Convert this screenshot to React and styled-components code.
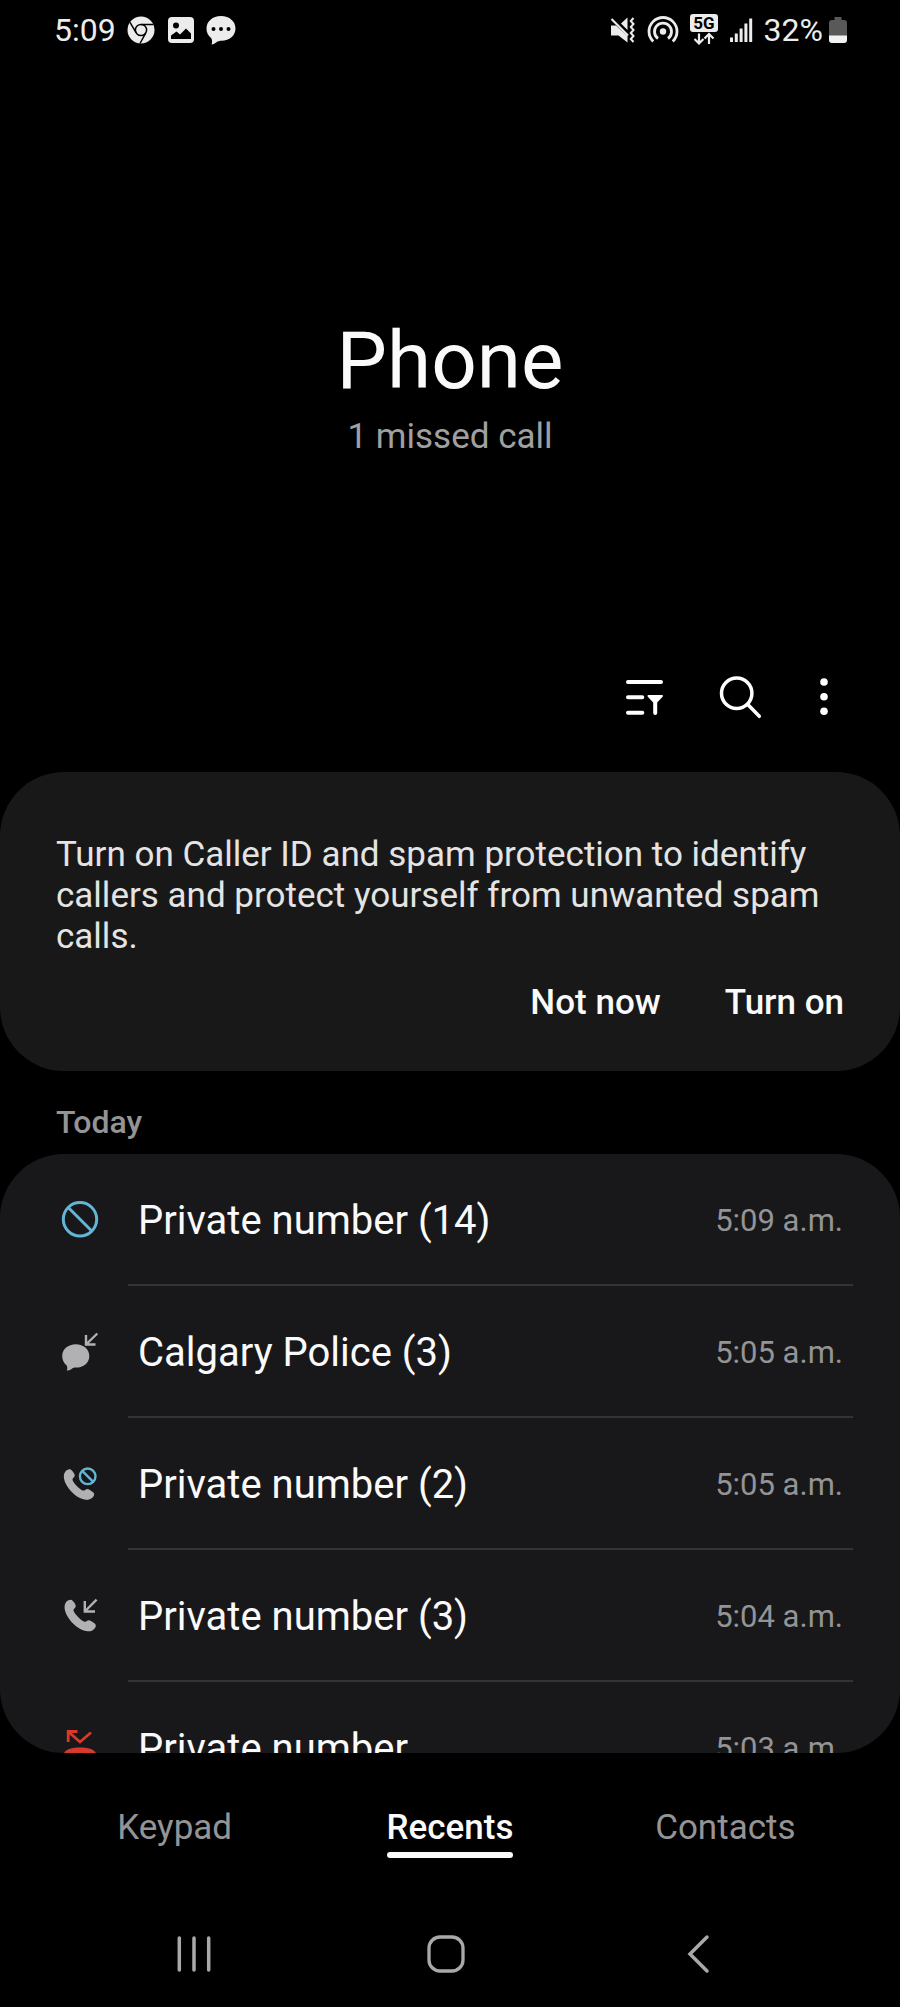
import React from 'react';
import styled, {createGlobalStyle} from 'styled-components';

const HANDSET = 'M6.5 .2C8.2 .2 9.6 2 11 4.3C12.2 6.4 12 7.5 10.6 8.8C9.2 10 9.2 11.2 10.2 12.8C12 15.6 15.4 19.2 18.4 21.3C20.2 22.6 21.4 22.6 22.8 21.4C24 20.5 25.4 20.5 27 21.5L30 23.4C32.2 24.8 32.2 26.4 31.2 28.2C29.6 30.8 26.6 32.2 23.4 31.8C16 31 8 24.6 3.6 17C.4 11.5 -.4 6.5 1.8 3C3 1.2 4.8 .2 6.5 .2Z'

const ChromeIcon = () => (
    <svg width="30" height="30" viewBox="0 0 30 30">
        <circle cx="15" cy="15" r="13.5" fill="#ececec"/>
        <circle cx="15" cy="15" r="5.6" fill="none" stroke="#000" strokeWidth="1.5"/>
        <path d="M15 9.4H27.5M10.2 17.9L4 7.4M19.8 17.9L14 28.5" stroke="#000" strokeWidth="1.5"/>
    </svg>
)

const PictureIcon = () => (
    <svg width="30" height="30" viewBox="0 0 30 30">
        <rect x="2" y="2" width="26" height="26" rx="4" fill="#ececec"/>
        <circle cx="10" cy="10.5" r="3" fill="#000"/>
        <path d="M5 24V20.5L10.5 16.5L14 19.5L20 13.5L25 18.5V24Z" fill="#000"/>
    </svg>
)

const ChatIcon = () => (
    <svg width="30" height="30" viewBox="0 0 30 30">
        <path d="M15 1C23.5 1 29.5 6.5 29.5 13.5C29.5 20.5 23.5 25.8 15.5 25.8C13.5 25.8 12 26.3 10.5 27.3C9 28.3 7.5 29.3 5.5 29.5C6.3 27.5 6.3 25.5 5.3 23.3C2.3 21 .5 17.5 .5 13.5C.5 6.5 6.5 1 15 1Z" fill="#ececec"/>
        <g fill="#000">
            <circle cx="7.5" cy="14" r="2"/>
            <circle cx="15" cy="14" r="2"/>
            <circle cx="22.5" cy="14" r="2"/>
        </g>
    </svg>
)

const MuteIcon = () => (
    <svg width="26" height="32" viewBox="0 0 26 32">
        <path d="M17.5 3.5V16L11 9.5ZM1 11.5H6L17.5 22V28.5L8.5 21.5H1Z" fill="#ececec"/>
        <path d="M1.5 5L18 21.5" stroke="#ececec" strokeWidth="2.2"/>
        <path d="M23.5 4L20.8 7L23.5 10L20.8 13L23.5 16L20.8 19L23.5 22L20.8 25L23.5 28" fill="none" stroke="#ececec" strokeWidth="2"/>
    </svg>
)

const HotspotIcon = () => (
    <svg width="32" height="32" viewBox="0 0 32 32">
        <circle cx="16" cy="17.5" r="3.2" fill="#ececec"/>
        <g fill="none" stroke="#ececec" strokeWidth="2.8">
            <path d="M11 24.5A8.5 8.5 0 1 1 21 24.5"/>
            <path d="M6.2 27.5A14 14 0 1 1 25.8 27.5"/>
        </g>
    </svg>
)

const NetworkIcon = () => (
    <svg width="28" height="32" viewBox="0 0 28 32">
        <rect x="0" y="0" width="28" height="18" rx="3" fill="#ececec"/>
        <text x="14" y="15" textAnchor="middle" fontFamily="Roboto, sans-serif" fontSize="17" fontWeight="700" fill="#000">5G</text>
        <path d="M9 19.5V29M4.5 25L9 29.5L13.5 25M19 30V20M14.5 24.5L19 20L23.5 24.5" fill="none" stroke="#ececec" strokeWidth="2.2"/>
    </svg>
)

const SignalIcon = () => (
    <svg width="24" height="32" viewBox="0 0 24 32">
        <path d="M2.5 28V23.5M7.3 28V19.5M12.1 28V14.5M16.9 28V9.5M21.7 28V4.5" stroke="#ececec" strokeWidth="3"/>
    </svg>
)

const BatteryIcon = () => (
    <svg width="18" height="32" viewBox="0 0 18 32">
        <path d="M5.5 3H12.5V6H15A3 3 0 0 1 18 9V22H0V9A3 3 0 0 1 3 6H5.5Z" fill="#595959"/>
        <path d="M0 21.5H18V26A3 3 0 0 1 15 29H3A3 3 0 0 1 0 26Z" fill="#f2f2f2"/>
    </svg>
)

const FilterIcon = () => (
    <svg width="48" height="48" viewBox="0 0 48 48">
        <path d="M8 9H41M8 24.3H22.3M8 39.7H22.3" stroke="#fff" strokeWidth="4" strokeLinecap="round"/>
        <path d="M28.5 22H42C43 22 43.3 23 42.6 23.7L37.2 29.5V40A2 2 0 0 1 33.2 40V29.5L27.8 23.7C27.2 23 27.5 22 28.5 22Z" fill="#fff"/>
    </svg>
)

const SearchIcon = () => (
    <svg width="48" height="48" viewBox="0 0 48 48">
        <g fill="none" stroke="#fff" strokeWidth="3.5" strokeLinecap="round">
            <circle cx="20.7" cy="20.3" r="15.2"/>
            <path d="M31.8 31.5L43.3 43.3"/>
        </g>
    </svg>
)

const MoreIcon = () => (
    <svg width="24" height="48" viewBox="0 0 24 48">
        <g fill="#fff">
            <circle cx="12" cy="9" r="3.8"/>
            <circle cx="12" cy="23.7" r="3.8"/>
            <circle cx="12" cy="38.3" r="3.8"/>
        </g>
    </svg>
)

const CallIcon = ({type}) => (
    <svg width="40" height="40" viewBox="0 0 40 40">
        {type === 'blocked' && (
            <g fill="none" stroke="#62b6d4" strokeWidth="3">
                <circle cx="20" cy="19.3" r="16.7"/>
                <path d="M8 7.3L32 31.3"/>
            </g>
        )}
        {type === 'message' && (
            <>
                <path d="M15.8 12.3C23.5 12.3 29.3 17.3 29.3 24C29.3 31 23.5 35.6 16 35.6C14.5 35.6 13.2 35.9 12 36.7C10.5 37.7 9 38.5 6.7 38.5C7.6 36.8 7.5 35 6.5 33.2C3.8 31.2 2.2 28 2.2 24C2.2 17.3 8.2 12.3 15.8 12.3Z" fill="#b1b1b3"/>
                <path d="M26 3V12.5H35.5M37.3 1.5L26.5 12" fill="none" stroke="#b1b1b3" strokeWidth="2.4"/>
            </>
        )}
        {type === 'rejected' && (
            <>
                <path d={HANDSET} transform="translate(3.3 5) scale(.97)" fill="#b1b1b3"/>
                <circle cx="27.7" cy="12.3" r="9.6" fill="#18181a"/>
                <g fill="none" stroke="#62b6d4" strokeWidth="2.4">
                    <circle cx="27.7" cy="12.3" r="7.8"/>
                    <path d="M22.2 6.8L33.2 17.8"/>
                </g>
            </>
        )}
        {type === 'incoming' && (
            <>
                <path d={HANDSET} transform="translate(4 3.5)" fill="#b1b1b3"/>
                <path d="M24.8 5V15.5H35M36.6 3.7L25.3 15" fill="none" stroke="#b1b1b3" strokeWidth="2.4"/>
            </>
        )}
        {type === 'missed' && (
            <g fill="none" stroke="#d8392b" strokeWidth="2.8">
                <path d="M8.2 14V3.5H17.5M8.2 3.5L20 14L31 4.5"/>
                <path d="M20 19.5C28 19.5 34.5 21 36 25.5V30H28V26.5H12V30H4V25.5C5.5 21 12 19.5 20 19.5Z" fill="#d8392b" stroke="none"/>
            </g>
        )}
    </svg>
)

const RecentAppsIcon = () => (
    <svg width="40" height="40" viewBox="0 0 40 40">
        <path d="M5.3 4V36M20 4V36M34.7 4V36" stroke="#a9a9ab" strokeWidth="3.5" strokeLinecap="round"/>
    </svg>
)

const HomeIcon = () => (
    <svg width="40" height="40" viewBox="0 0 40 40">
        <rect x="3" y="3" width="34" height="34" rx="11" fill="none" stroke="#a9a9ab" strokeWidth="3.3"/>
    </svg>
)

const BackIcon = () => (
    <svg width="40" height="40" viewBox="0 0 40 40">
        <path d="M29 3L12 20L29 37" fill="none" stroke="#a9a9ab" strokeWidth="3.5" strokeLinecap="round"/>
    </svg>
)

const calls = [
    {type: 'blocked', name: 'Private number (14)', time: '5:09 a.m.'},
    {type: 'message', name: 'Calgary Police (3)', time: '5:05 a.m.'},
    {type: 'rejected', name: 'Private number (2)', time: '5:05 a.m.'},
    {type: 'incoming', name: 'Private number (3)', time: '5:04 a.m.'},
    {type: 'missed', name: 'Private number', time: '5:03 a.m.'},
]

const tabs = ['Keypad', 'Recents', 'Contacts']

const App = () => {
    return (
        <>
            <GlobalStyle/>
            <Screen>
                <StatusBar>
                    <StatusLeft>
                        <span>5:09</span>
                        <ChromeIcon/>
                        <PictureIcon/>
                        <ChatIcon/>
                    </StatusLeft>
                    <StatusRight>
                        <MuteIcon/>
                        <HotspotIcon/>
                        <NetworkIcon/>
                        <SignalIcon/>
                        <BatteryLevel>32%<BatteryIcon/></BatteryLevel>
                    </StatusRight>
                </StatusBar>
                <Header>
                    <h1>Phone</h1>
                    <p>1 missed call</p>
                </Header>
                <Toolbar>
                    <IconButton aria-label="Filter"><FilterIcon/></IconButton>
                    <IconButton aria-label="Search"><SearchIcon/></IconButton>
                    <IconButton aria-label="More options"><MoreIcon/></IconButton>
                </Toolbar>
                <Notice>
                    <p>Turn on Caller ID and spam protection to identify callers and protect yourself from unwanted spam
                        calls.</p>
                    <NoticeActions>
                        <TextButton>Not now</TextButton>
                        <TextButton>Turn on</TextButton>
                    </NoticeActions>
                </Notice>
                <DayTitle>Today</DayTitle>
                <CallList>
                    {calls.map((call, index) => (
                        <CallRow key={index}>
                            <CallIcon type={call.type}/>
                            <CallInfo>
                                <CallName>{call.name}</CallName>
                                <CallTime>{call.time}</CallTime>
                            </CallInfo>
                        </CallRow>
                    ))}
                </CallList>
                <Tabs>
                    {tabs.map(tab => (
                        <Tab key={tab} $active={tab === 'Recents'}>
                            <span>{tab}</span>
                        </Tab>
                    ))}
                </Tabs>
                <SystemNav>
                    <IconButton aria-label="Recent apps"><RecentAppsIcon/></IconButton>
                    <IconButton aria-label="Home"><HomeIcon/></IconButton>
                    <IconButton aria-label="Back"><BackIcon/></IconButton>
                </SystemNav>
            </Screen>
        </>
    )
}

const GlobalStyle = createGlobalStyle`
  * {
    box-sizing: border-box;
  }

  body {
    margin: 0;
    background: #000;
    color: #fafafa;
    font-family: Roboto, sans-serif;
  }

  h1, h2, p, ul {
    margin: 0;
    padding: 0;
    font-weight: 400;
  }

  button {
    padding: 0;
    border: none;
    background: none;
    color: inherit;
    font: inherit;
  }

  svg {
    display: block;
    flex-shrink: 0;
  }
`

const Screen = styled('div')`
  display: flex;
  flex-direction: column;
  height: 100vh;
`

const StatusBar = styled('div')`
  display: flex;
  justify-content: space-between;
  align-items: center;
  flex-shrink: 0;
  height: 60px;
  padding: 0 53px 0 54px;
  font-size: 32px;
  color: #ececec;
`

const StatusLeft = styled('div')`
  display: flex;
  align-items: center;
  gap: 10px;
`

const StatusRight = styled('div')`
  display: flex;
  align-items: center;
  gap: 11px;
`

const BatteryLevel = styled('div')`
  display: flex;
  align-items: center;
  gap: 6px;
`

const Header = styled('header')`
  flex-shrink: 0;
  padding: 253px 24px 192px;
  text-align: center;

  h1 {
    font-size: 80px;
    line-height: 96px;
  }

  p {
    margin-top: 8px;
    font-size: 35px;
    line-height: 40px;
    color: #a0a0a0;
  }
`

const Toolbar = styled('div')`
  display: flex;
  justify-content: flex-end;
  align-items: center;
  flex-shrink: 0;
  gap: 48px;
  height: 96px;
  margin-bottom: 27px;
  padding: 0 64px;
`

const IconButton = styled('button')`
  display: flex;
  justify-content: center;
  align-items: center;
`

const Notice = styled('section')`
  flex-shrink: 0;
  padding: 62px 56px 48px;
  border-radius: 64px;
  background: #181818;
  font-size: 35px;
  line-height: 41px;
  color: #e4e4e4;
`

const NoticeActions = styled('div')`
  display: flex;
  justify-content: flex-end;
  gap: 64px;
  margin-top: 25px;
`

const TextButton = styled('button')`
  font-weight: 500;
  color: #fafafa;
`

const DayTitle = styled('h2')`
  flex-shrink: 0;
  padding: 32px 56px 13px;
  font-size: 32px;
  font-weight: 500;
  line-height: 38px;
  color: #949494;
`

const CallList = styled('ul')`
  flex: 1;
  min-height: 0;
  overflow: hidden;
  border-radius: 64px;
  background: #18181a;
  list-style: none;
`

const CallRow = styled('li')`
  display: flex;
  align-items: center;
  gap: 28px;
  height: 132px;
  padding: 0 47px 0 60px;
`

const CallInfo = styled('div')`
  display: flex;
  justify-content: space-between;
  align-items: center;
  flex: 1;
  height: 100%;
  padding: 2px 10px 0;
  border-bottom: 2px solid #333335;
`

const CallName = styled('span')`
  font-size: 40px;
`

const CallTime = styled('time')`
  font-size: 31px;
  color: #949496;
`

const Tabs = styled('nav')`
  display: grid;
  grid-template-columns: repeat(3, 1fr);
  justify-items: center;
  align-items: start;
  flex-shrink: 0;
  height: 147px;
  padding: 54px 37px 0;
`

const Tab = styled('button')`
  font-size: 35px;
  font-weight: ${({$active}) => $active ? 500 : 400};
  line-height: 41px;
  color: ${({$active}) => $active ? '#fafafa' : '#949496'};

  &::after {
    content: '';
    display: block;
    height: 6px;
    margin-top: 4px;
    border-radius: 3px;
    background: ${({$active}) => $active ? '#fafafa' : 'transparent'};
  }
`

const SystemNav = styled('nav')`
  display: grid;
  grid-template-columns: repeat(3, 1fr);
  flex-shrink: 0;
  height: 107px;
  padding: 0 76px 0 68px;
`

export default App;
